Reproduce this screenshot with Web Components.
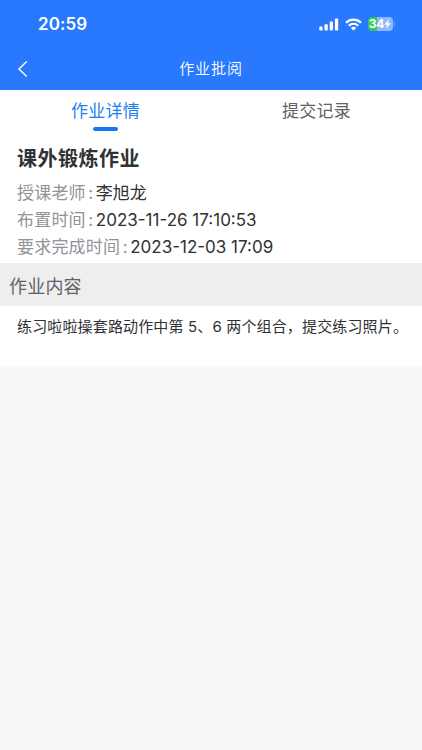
<!DOCTYPE html>
<html lang="zh-CN">
<head>
<meta charset="utf-8">
<title>作业批阅</title>
<style>
html,body{margin:0;height:100%}
body{background:#f8f8f8;font-family:Inter,"Noto Sans CJK SC",sans-serif;color:#303133;overflow:hidden}
</style>
</head>
<body>
<homework-page></homework-page>
<script>
const define = (name, html) => customElements.define(name, class extends HTMLElement {
  constructor() {
    super();
    const t = document.createElement('template');
    t.innerHTML = html;
    this.attachShadow({mode: 'open'}).appendChild(t.content.cloneNode(true));
  }
});

define('status-bar', `
<style>
:host{display:flex;height:48px;box-sizing:border-box;padding:0 27px 0 38px;align-items:center;color:#fff}
.time{font-size:17px;line-height:20px;font-weight:600;letter-spacing:.1px;flex:1}
svg{display:block}
.sig{margin-right:6px}
.wifi{margin-right:6px}
.bat{display:flex;align-items:center;width:25px;height:14px;border-radius:4px;background:linear-gradient(90deg,#34c759 0 9px,#8db8ff 9px);font-size:12px;line-height:14px;font-weight:700;justify-content:center;letter-spacing:-.3px}
.cap{width:1.5px;height:4px;border-radius:0 2px 2px 0;background:#72a5ff;margin-left:1px}
</style>
<span class="time">20:59</span>
<svg class="sig" width="20" height="13" viewBox="0 0 20 13" fill="#fff"><rect x=".3" y="8.4" width="3.3" height="4.2" rx="1"/><rect x="5.5" y="6.2" width="3.3" height="6.4" rx="1"/><rect x="10.7" y="3.4" width="3.3" height="9.2" rx="1"/><rect x="15.9" y=".4" width="3.3" height="12.2" rx="1"/></svg>
<svg class="wifi" width="17" height="13" viewBox="0 0 17 13" fill="none" stroke="#fff" stroke-width="2.2"><path d="M1 4.7C5.2.5 11.8.5 16 4.7"/><path d="M3.8 7.7C6.5 5.1 10.5 5.1 13.2 7.7"/><path d="M8.5 12.6L5.8 9.9Q8.5 7.8 11.2 9.9Z" fill="#fff" stroke="none"/></svg>
<span class="bat"><span>34</span><svg width="7" height="10" viewBox="0 0 7 10" fill="#fff"><path d="M4.8 0L.3 5.7H3.1L2.1 10L6.8 4.2H4Z"/></svg></span><span class="cap"></span>`);

define('nav-bar', `
<style>
:host{display:grid;grid-template-columns:44px 1fr 44px;height:42px;align-items:center;color:#fff}
svg{display:block;margin-left:17px}
.t{text-align:center;font-size:15px;line-height:20px;letter-spacing:.9px;font-weight:350}
</style>
<svg width="12" height="18" viewBox="0 0 12 18" fill="none" stroke="#fff" stroke-width="1.4"><path d="M9.7 1.5L2 9L9.7 16.5"/></svg>
<span class="t"><slot></slot></span>`);

define('tab-item', `
<style>
:host{display:flex;flex:1;flex-direction:column;align-items:center;color:#606266;font-size:17px;line-height:24px;letter-spacing:.2px;padding-top:9px}
:host([active]){color:#1c80f2}
i{width:25px;height:4px;border-radius:2px;margin-top:4px}
:host([active]) i{background:#1479ee}
</style>
<span><slot></slot></span><i></i>`);

define('tab-row', `<style>:host{display:flex;height:49px}</style><slot></slot>`);

define('info-row', `
<style>
:host{display:flex;height:27px;align-items:center;font-size:17px;line-height:27px;white-space:nowrap}
.l{color:#909399;letter-spacing:.2px}
.c{color:#909399;width:10px;text-align:center}
.v{color:#303133;letter-spacing:var(--v,0)}
</style>
<span class="l"><slot name="label"></slot></span><span class="c">:</span><span class="v"><slot></slot></span>`);

define('section-head', `
<style>:host{display:flex;align-items:center;height:43px;padding-left:9px;background:#eee;color:#606266;font-size:18px;letter-spacing:.2px}</style>
<slot></slot>`);

define('homework-page', `
<style>
:host{display:block}
header{background:#2979ff}
main{background:#fff;height:276px}
h1{margin:0;padding-left:17px;height:41px;line-height:40px;font-size:20px;letter-spacing:.5px;font-weight:700}
.info{padding-left:17px;height:83px}
p{margin:0;padding:9px 17px;font-size:15px;line-height:24px;letter-spacing:.15px;white-space:nowrap}
</style>
<header><status-bar></status-bar><nav-bar>作业批阅</nav-bar></header>
<main>
<tab-row><tab-item active>作业详情</tab-item><tab-item>提交记录</tab-item></tab-row>
<h1>课外锻炼作业</h1>
<div class="info">
<info-row><span slot="label">授课老师</span>李旭龙</info-row>
<info-row><span slot="label">布置时间</span>2023-11-26 17:10:53</info-row>
<info-row><span slot="label">要求完成时间</span>2023-12-03 17:09</info-row>
</div>
<section-head>作业内容</section-head>
<p>练习啦啦操套路动作中第 5、6 两个组合，提交练习照片。</p>
</main>`);
</script>
</body>
</html>
